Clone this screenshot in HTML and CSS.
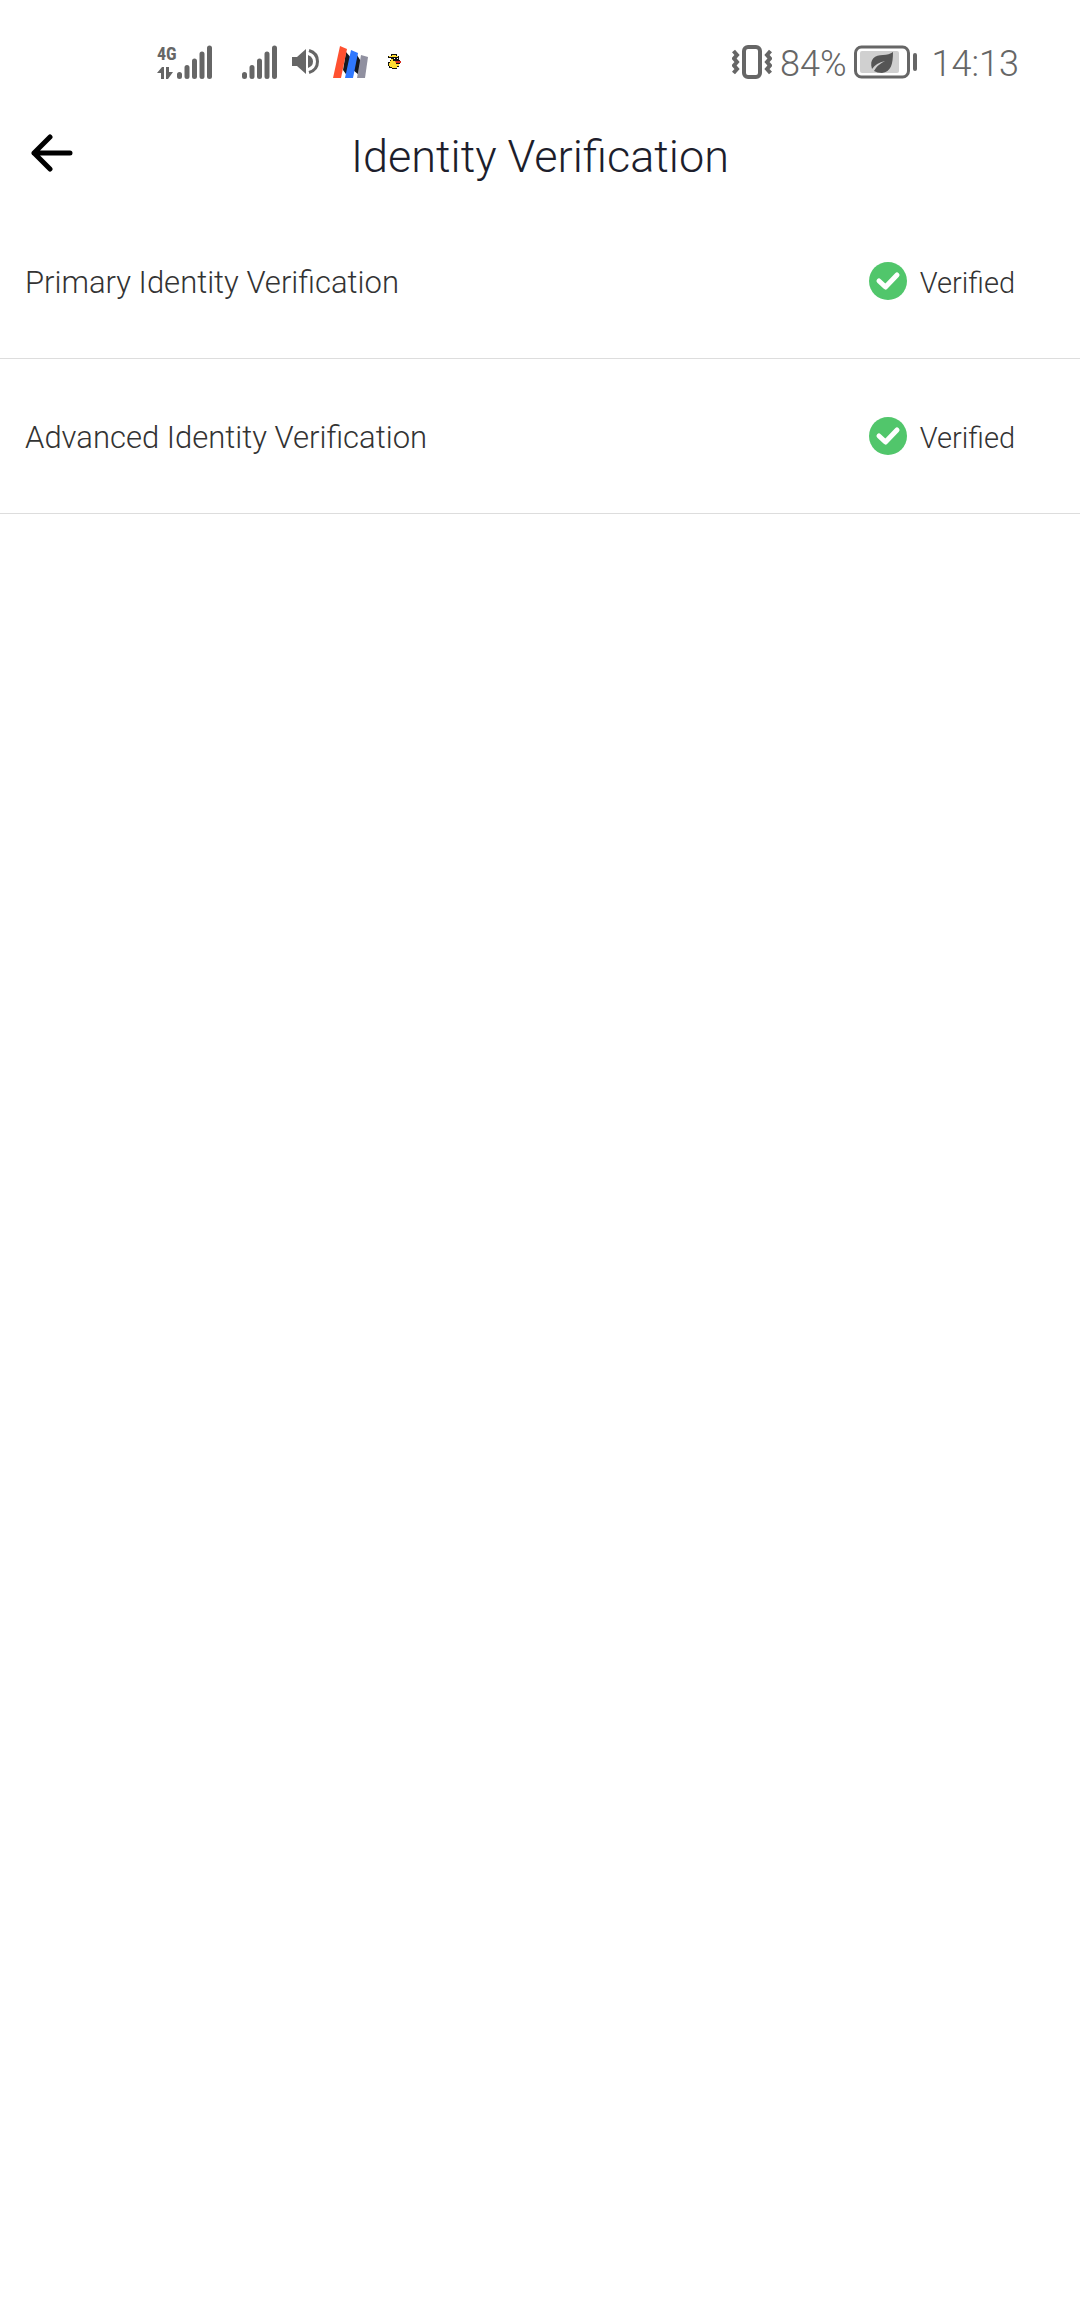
FILE: index.html
```html
<!doctype html>
<html lang="en">
<head>
<meta charset="utf-8">
<meta name="viewport" content="width=device-width, initial-scale=1">
<title>Identity Verification</title>
<link rel="stylesheet" href="styles.css">
</head>

<body>
<div class="status">
	<div class="net">
		<div class="net-type">
			<span>4G</span>
			<svg width="16" height="12" viewBox="0 0 16 12"><path d="M0 6L5 0H7V12H4V6ZM9 0H12V5H16L11 12H9Z"/></svg>
		</div>
		<svg class="bars" width="35" height="34" viewBox="0 0 35 34"><path d="M2.5 29.5V31.5M10 22.5V31.5M17.5 16V31.5M25 9V31.5M32.5 3V31.5"/></svg>
	</div>
	<svg class="bars sim2" width="35" height="34" viewBox="0 0 35 34"><path d="M2.5 29.5V31.5M10 22.5V31.5M17.5 16V31.5M25 9V31.5M32.5 3V31.5"/></svg>
	<svg class="sound" width="28" height="26" viewBox="0 0 28 26">
		<path d="M0 8H5L14 0V25L5 17H0Z"/>
		<path d="M16 6Q21 8 21 12.5T16 19Z"/>
		<path d="M17 1.5Q25.5 4 25.5 12.5T17 23.5" fill="none" stroke="#666" stroke-width="3"/>
	</svg>
	<svg class="app" width="35" height="32" viewBox="0 0 35 32">
		<path d="M13 6L19 13V24L15 31L10 24ZM24 9L29 17L26 29L20 24Z" fill="#15181f"/>
		<path d="M7 0L14 3L8 32H0Z" fill="#ff5130"/>
		<path d="M18 4L25 7L20 32H12Z" fill="#2f78ff"/>
		<path d="M28 9L35 11L32 32H24Z" fill="#9090a0"/>
	</svg>
	<svg class="duck" width="14" height="16" viewBox="0 0 14 16">
		<path d="M3 0H9V2H11V6H12V10H11V13H9V15H4V14H1V12H0V8H2V6H3V4H0V2H3Z" fill="#111"/>
		<path d="M4 1H8V2H10V3H1V2H4ZM3 5H5V7H8V10H11V12H9V14H4V13H2V12H1V9H2V7H3Z" fill="#fd3"/>
		<path d="M6 4H7V5H6ZM9 4H10V5H9Z" fill="#fff"/>
		<path d="M7 7H13V9H8Z" fill="#d62b1f"/>
	</svg>

	<div class="right">
		<svg width="40" height="34" viewBox="0 0 40 34" fill="none" stroke="#666" stroke-width="4">
			<rect x="12" y="2" width="16" height="30" rx="4"/>
			<path d="M1.5 6L5 10L2 13.5L5 17L2 20.5L5 24L1.5 28M38.5 6L35 10L38 13.5L35 17L38 20.5L35 24L38.5 28"/>
		</svg>
		<span class="percent">84%</span>
		<svg width="64" height="34" viewBox="0 0 64 34">
			<rect x="1.5" y="2" width="53" height="30" rx="6" fill="none" stroke="#666" stroke-width="3"/>
			<rect x="6" y="6" width="39" height="22" rx="2" fill="#d0d0d0"/>
			<rect x="59" y="8" width="4" height="18" rx="2"/>
			<path d="M39 7C39 19 37 27 28 28Q23 28 20 26Q23 20 31 16Q22 18 18 24C15 14 21 10 29 10Q35 10 39 7Z" fill="#555"/>
		</svg>
		<span class="time">14:13</span>
	</div>
</div>

<header class="head">
	<button class="back" type="button" aria-label="Back">
		<svg width="42" height="38" viewBox="0 0 42 38" fill="none" stroke="#000" stroke-width="5" stroke-linecap="round" stroke-linejoin="round"><path d="M39 19H3M19 3L3 19L19 35"/></svg>
	</button>
	<h1>Identity Verification</h1>
</header>

<ul class="list">
	<li>
		<span class="name">Primary Identity Verification</span>
		<svg class="tick" width="38" height="38" viewBox="0 0 38 38"><circle cx="19" cy="19" r="19"/><path d="M10 19L16.5 25L28 13"/></svg>
		<span class="state">Verified</span>
	</li>
	<li>
		<span class="name">Advanced Identity Verification</span>
		<svg class="tick" width="38" height="38" viewBox="0 0 38 38"><circle cx="19" cy="19" r="19"/><path d="M10 19L16.5 25L28 13"/></svg>
		<span class="state">Verified</span>
	</li>
</ul>
</body>
</html>
```
FILE: styles.css
```css
* {margin:0; padding:0; list-style:none; box-sizing:border-box;}
body {background:#fff; color:#333; font-family:Roboto, "Liberation Sans", sans-serif; font-weight:300;}
svg {display:block; flex:none;}

/* status bar */
.status {display:flex; align-items:center; height:110px; padding:14px 61px 0 157px; color:#666; fill:#666;}
.net {display:flex; align-items:flex-end;}
.net-type {display:flex; flex-direction:column; height:34px; justify-content:space-between;}
.net-type span {font:bold 18px/18px "Roboto Condensed", Roboto, sans-serif;}
.bars {fill:none; stroke:#666; stroke-width:5; stroke-linecap:round;}
.sim2 {margin-left:30px;}
.sound {margin-left:15px;}
.app {margin-left:13px;}
.duck {margin-left:20px;}
.right {display:flex; align-items:center; margin-left:auto;}
.percent, .time {font:300 36px/40px Roboto, sans-serif;}
.percent {margin:4px 7px 0 8px;}
.time {margin:4px 0 0 14px;}

/* title */
.head {display:flex; align-items:center; height:94px; padding:0 29px;}
.back {width:46px; height:46px; margin-top:-8px; border:0; background:none; cursor:pointer;}
.back svg {margin:0 auto;}
.head h1 {flex:1; margin-right:46px; text-align:center; font-size:45px; line-height:56px; font-weight:300; color:#1d1e2c;}

/* list */
.list li {display:flex; align-items:center; height:155px; padding:0 65px 0 25px; border-bottom:1px solid #ddd;}
.name, .state {padding-top:3px; line-height:40px;}
.name {flex:1; font-size:31px;}
.state {margin-left:13px; font-size:29px;}
.tick circle {fill:#51c66b;}
.tick path {fill:none; stroke:#fff; stroke-width:5; stroke-linecap:round; stroke-linejoin:round;}
```
